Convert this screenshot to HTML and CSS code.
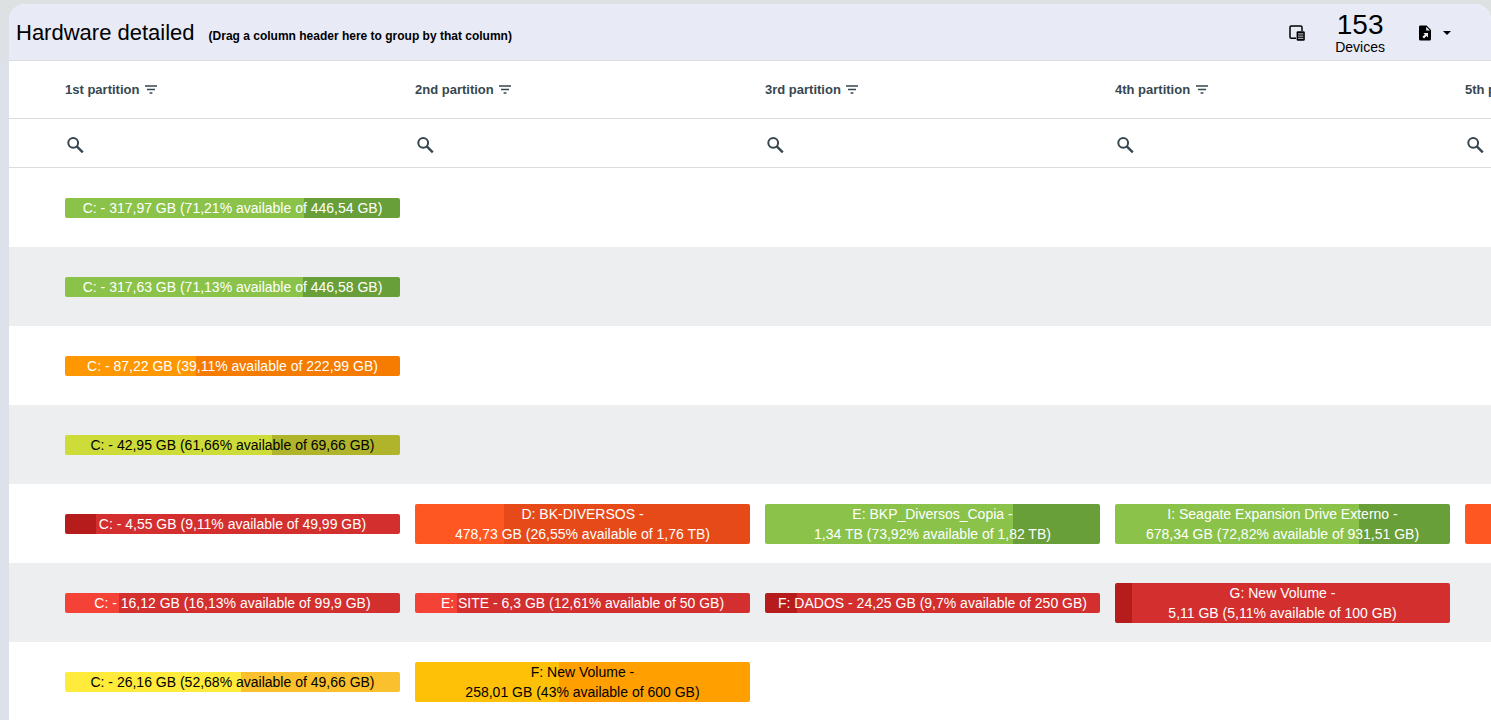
FILE: index.html
```html
<!DOCTYPE html>
<html lang="en">
<head>
  <meta charset="UTF-8" />
  <meta name="viewport" content="width=device-width, initial-scale=1.0" />
  <title>Hardware detailed</title>
  <link rel="stylesheet" href="styles.css">
</head>
<body>
  <svg class="sprite" aria-hidden="true">
    <symbol id="icon-filter" viewBox="0 0 12 10">
      <path d="M0 1h12M2 4.5h8M4.6 8h2.8" fill="none" stroke="currentColor" stroke-width="1.6"/>
    </symbol>
    <symbol id="icon-search" viewBox="0 0 18 18">
      <circle cx="7.2" cy="6.8" r="4.9" fill="none" stroke="currentColor" stroke-width="2"/>
      <path d="M10.8 10.4L16.8 16.4" fill="none" stroke="currentColor" stroke-width="2.4"/>
    </symbol>
  </svg>

  <main class="panel">
    <header class="toolbar">
      <h1 class="title">Hardware detailed</h1>
      <span class="hint">(Drag a column header here to group by that column)</span>
      <div class="tools">
        <button class="icon-button" type="button" aria-label="Choose columns">
          <svg width="16" height="16" viewBox="0 0 16 16">
            <path d="M7 13.2H2.3a1.3 1.3 0 0 1-1.3-1.3V2.3A1.3 1.3 0 0 1 2.3 1h9.4A1.3 1.3 0 0 1 13 2.3V6" fill="none" stroke="currentColor" stroke-width="1.5"/>
            <rect x="7.6" y="6.2" width="8.2" height="9.6" rx="1.4" fill="currentColor"/>
            <path d="M9 8.9h5.4M9 11.1h5.4M9 13.3h5.4" stroke="#e8eaf6" stroke-width="0.9"/>
          </svg>
        </button>
        <div class="count">
          <span class="count-number">153</span>
          <span class="count-label">Devices</span>
        </div>
        <button class="icon-button export" type="button" aria-label="Export">
          <svg width="12" height="16" viewBox="0 0 12 16">
            <path d="M1.6 0.5H7.6L12 5v9a1.5 1.5 0 0 1-1.5 1.5h-9A1.5 1.5 0 0 1 0 14V2A1.5 1.5 0 0 1 1.6 0.5z" fill="currentColor"/>
            <path d="M7.2 1.8V5.4h3.7z" fill="#e8eaf6"/>
            <path d="M4.4 8H9v4.6L7.5 11.1 5 13.4 3.4 11.8 5.9 9.5z" fill="#e8eaf6"/>
          </svg>
          <svg width="8" height="4" viewBox="0 0 8 4">
            <path d="M0 0h8L4 4z" fill="currentColor"/>
          </svg>
        </button>
      </div>
    </header>

    <table class="grid">
      <colgroup>
        <col class="col-lead">
        <col class="col-part">
        <col class="col-part">
        <col class="col-part">
        <col class="col-part">
        <col class="col-part">
      </colgroup>
      <thead>
        <tr class="heads">
          <td></td>
          <th scope="col">1st partition <svg class="filter"><use href="#icon-filter"/></svg></th>
          <th scope="col">2nd partition <svg class="filter"><use href="#icon-filter"/></svg></th>
          <th scope="col">3rd partition <svg class="filter"><use href="#icon-filter"/></svg></th>
          <th scope="col">4th partition <svg class="filter"><use href="#icon-filter"/></svg></th>
          <th scope="col">5th partition <svg class="filter"><use href="#icon-filter"/></svg></th>
        </tr>
        <tr class="filters">
          <td></td>
          <td><label class="search"><svg><use href="#icon-search"/></svg><input type="text" aria-label="Filter 1st partition"></label></td>
          <td><label class="search"><svg><use href="#icon-search"/></svg><input type="text" aria-label="Filter 2nd partition"></label></td>
          <td><label class="search"><svg><use href="#icon-search"/></svg><input type="text" aria-label="Filter 3rd partition"></label></td>
          <td><label class="search"><svg><use href="#icon-search"/></svg><input type="text" aria-label="Filter 4th partition"></label></td>
          <td><label class="search"><svg><use href="#icon-search"/></svg><input type="text" aria-label="Filter 5th partition"></label></td>
        </tr>
      </thead>
      <tbody>
        <tr>
          <td></td>
          <td><div class="bar green" style="--free: 71.21%">C: - 317,97 GB (71,21% available of 446,54 GB)</div></td>
          <td></td>
          <td></td>
          <td></td>
          <td></td>
        </tr>
        <tr>
          <td></td>
          <td><div class="bar green" style="--free: 71.13%">C: - 317,63 GB (71,13% available of 446,58 GB)</div></td>
          <td></td>
          <td></td>
          <td></td>
          <td></td>
        </tr>
        <tr>
          <td></td>
          <td><div class="bar orange" style="--free: 39.11%">C: - 87,22 GB (39,11% available of 222,99 GB)</div></td>
          <td></td>
          <td></td>
          <td></td>
          <td></td>
        </tr>
        <tr>
          <td></td>
          <td><div class="bar lime" style="--free: 61.66%">C: - 42,95 GB (61,66% available of 69,66 GB)</div></td>
          <td></td>
          <td></td>
          <td></td>
          <td></td>
        </tr>
        <tr>
          <td></td>
          <td><div class="bar dark-red" style="--free: 9.11%">C: - 4,55 GB (9,11% available of 49,99 GB)</div></td>
          <td><div class="bar deep-orange" style="--free: 26.55%">D: BK-DIVERSOS -<br>478,73 GB (26,55% available of 1,76 TB)</div></td>
          <td><div class="bar green" style="--free: 73.92%">E: BKP_Diversos_Copia -<br>1,34 TB (73,92% available of 1,82 TB)</div></td>
          <td><div class="bar green" style="--free: 72.82%">I: Seagate Expansion Drive Externo -<br>678,34 GB (72,82% available of 931,51 GB)</div></td>
          <td><div class="bar deep-orange tall" style="--free: 25%"></div></td>
        </tr>
        <tr>
          <td></td>
          <td><div class="bar red" style="--free: 16.13%">C: - 16,12 GB (16,13% available of 99,9 GB)</div></td>
          <td><div class="bar red" style="--free: 12.61%">E: SITE - 6,3 GB (12,61% available of 50 GB)</div></td>
          <td><div class="bar dark-red" style="--free: 9.7%">F: DADOS - 24,25 GB (9,7% available of 250 GB)</div></td>
          <td><div class="bar dark-red" style="--free: 5.11%">G: New Volume -<br>5,11 GB (5,11% available of 100 GB)</div></td>
          <td></td>
        </tr>
        <tr>
          <td></td>
          <td><div class="bar yellow" style="--free: 52.68%">C: - 26,16 GB (52,68% available of 49,66 GB)</div></td>
          <td><div class="bar amber" style="--free: 43%">F: New Volume -<br>258,01 GB (43% available of 600 GB)</div></td>
          <td></td>
          <td></td>
          <td></td>
        </tr>
      </tbody>
    </table>
  </main>
</body>
</html>
```

FILE: styles.css
```css
*,
*::before,
*::after {
  box-sizing: border-box;
}

html, body {
  height: 100%;
}

body {
  margin: 0;
  padding: 4px 0 0 9px;
  overflow: hidden;
  background: linear-gradient(to bottom, #dde1e2, #dde1e9 80px);
  color: #000;
  font-family: "Liberation Sans", Arial, sans-serif;
  font-size: 14px;
  line-height: 20px;
}

.sprite {
  display: none;
}

.panel {
  min-height: 100%;
  overflow: hidden;
  background: #fff;
  border-radius: 16px 16px 0 0;
}

/* toolbar */
.toolbar {
  display: flex;
  align-items: center;
  gap: 14px;
  height: 57px;
  padding: 2px 40px 0 7px;
  background: #e8eaf6;
  border-bottom: 1px solid #dcdde2;
}

.title {
  margin: 0;
  font-size: 22px;
  font-weight: 400;
  line-height: 28px;
}

.hint {
  padding-top: 6px;
  font-size: 12px;
  font-weight: 700;
}

.tools {
  display: flex;
  align-items: center;
  gap: 30px;
  margin-left: auto;
}

.icon-button {
  display: flex;
  align-items: center;
  padding: 0;
  border: 0;
  background: none;
  color: #000;
  cursor: pointer;
}

.count {
  display: flex;
  flex-direction: column;
  align-items: center;
}

.count-number {
  font-size: 28px;
  line-height: 28px;
}

.count-label {
  line-height: 16px;
}

.export {
  gap: 12px;
  margin-left: 4px;
}

/* grid */
.grid {
  width: 100%;
  table-layout: fixed;
  border-spacing: 0;
}

.col-lead {
  width: 48px;
}

.col-part {
  width: 350px;
}

.grid th,
.grid td {
  padding: 0 7px 0 8px;
  text-align: left;
}

.grid thead th,
.grid thead td {
  border-bottom: 1px solid #dcdcdc;
}

.heads {
  height: 58px;
}

.heads th {
  color: #37474f;
  font-size: 13px;
  font-weight: 700;
  white-space: nowrap;
}

.filter {
  width: 12px;
  height: 10px;
  margin-left: 2px;
  vertical-align: -1px;
}

.filters {
  height: 49px;
}

.search {
  display: flex;
  align-items: center;
  gap: 8px;
  padding: 4px 0 0 1px;
  color: #37474f;
}

.search svg {
  flex: none;
  width: 18px;
  height: 18px;
}

.search input {
  flex: 1;
  min-width: 0;
  padding: 0;
  border: 0;
  outline: 0;
  background: none;
  font: inherit;
}

.grid tbody tr {
  height: 79px;
}

.grid tbody tr:nth-child(even) {
  background: #eceef0;
}

/* disk usage bars, --free is the available share */
.bar {
  border-radius: 2px;
  background: linear-gradient(to right, var(--available) var(--free), var(--used) var(--free));
  color: #fff;
  text-align: center;
  white-space: nowrap;
}

.tall {
  height: 40px;
}

.green {
  --available: #8bc34a;
  --used: #689f38;
}

.lime {
  --available: #cddc39;
  --used: #afb42b;
  color: #000;
}

.yellow {
  --available: #ffeb3b;
  --used: #fbc02d;
  color: #000;
}

.amber {
  --available: #ffc107;
  --used: #ffa000;
  color: #000;
}

.orange {
  --available: #ff9800;
  --used: #f57c00;
}

.deep-orange {
  --available: #ff5722;
  --used: #e64a19;
}

.red {
  --available: #f44336;
  --used: #d32f2f;
}

.dark-red {
  --available: #b71c1c;
  --used: #d32f2f;
}
```
